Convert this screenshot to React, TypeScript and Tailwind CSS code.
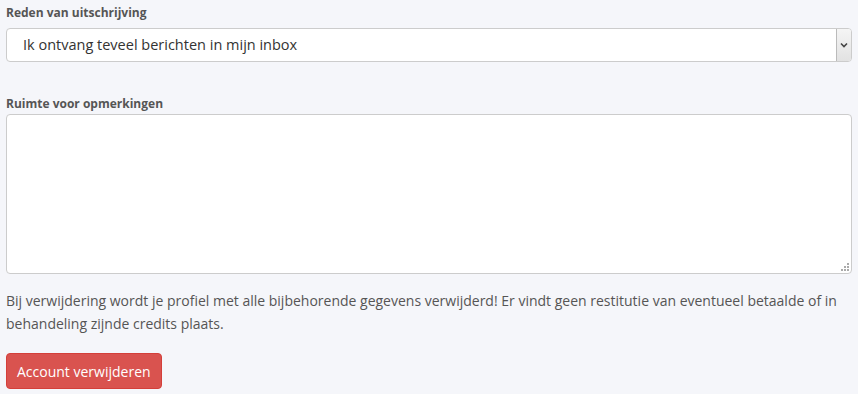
import React from 'react'

const font = { fontFamily: '"Open Sans", "Noto Sans", sans-serif' }

const App: React.FC = () => {
  return (
    <div className="min-h-[394px] w-[858px] bg-[#f5f6fa] px-[6px] pt-[4px] text-[#555]" style={font}>
      <label className="block text-[12px] font-bold leading-[18px] text-[#555]">Reden van uitschrijving</label>
      <div className="relative mt-[6px] h-[34px] w-[846px]">
        <select
          className="h-full w-full appearance-none rounded-[4px] border border-[#ccc] bg-white pl-[16px] text-[14.5px] text-[#333] outline-none"
          defaultValue="a"
        >
          <option value="a">Ik ontvang teveel berichten in mijn inbox</option>
        </select>
        <span className="pointer-events-none absolute right-[1px] top-[1px] flex h-[32px] w-[15px] items-center justify-center rounded-r-[3px] border-l border-[#bbb] bg-gradient-to-b from-[#f5f5f5] to-[#e2e2e2]">
          <svg width="8" height="6" viewBox="0 0 8 6">
            <path d="M1 1.5 L4 4.5 L7 1.5" fill="none" stroke="#444" strokeWidth="1.6" />
          </svg>
        </span>
      </div>

      <label className="mt-[33px] block text-[12px] font-bold leading-[18px] text-[#555]">Ruimte voor opmerkingen</label>
      <div className="relative mt-[1px] h-[160px] w-[846px]">
        <textarea className="block h-full w-full resize-none rounded-[4px] border border-[#ccc] bg-white outline-none" />
        <svg className="pointer-events-none absolute bottom-[3px] right-[3px]" width="8" height="8" viewBox="0 0 8 8">
          <rect x="6" y="0" width="2" height="2" fill="#aaa" />
          <rect x="3" y="3" width="2" height="2" fill="#aaa" />
          <rect x="6" y="3" width="2" height="2" fill="#aaa" />
          <rect x="0" y="6" width="2" height="2" fill="#aaa" />
          <rect x="3" y="6" width="2" height="2" fill="#aaa" />
          <rect x="6" y="6" width="2" height="2" fill="#aaa" />
        </svg>
      </div>

      <p className="mt-[15px] text-[14px] leading-[23px] text-[#555]">
        Bij verwijdering wordt je profiel met alle bijbehorende gegevens verwijderd! Er vindt geen restitutie van eventueel betaalde of in behandeling zijnde credits plaats.
      </p>

      <button className="mt-[18px] h-[36px] rounded-[4px] border border-[#d43f3a] bg-[#d9534f] px-[10px] text-[14px] text-white">
        Account verwijderen
      </button>
    </div>
  )
}

export default App
